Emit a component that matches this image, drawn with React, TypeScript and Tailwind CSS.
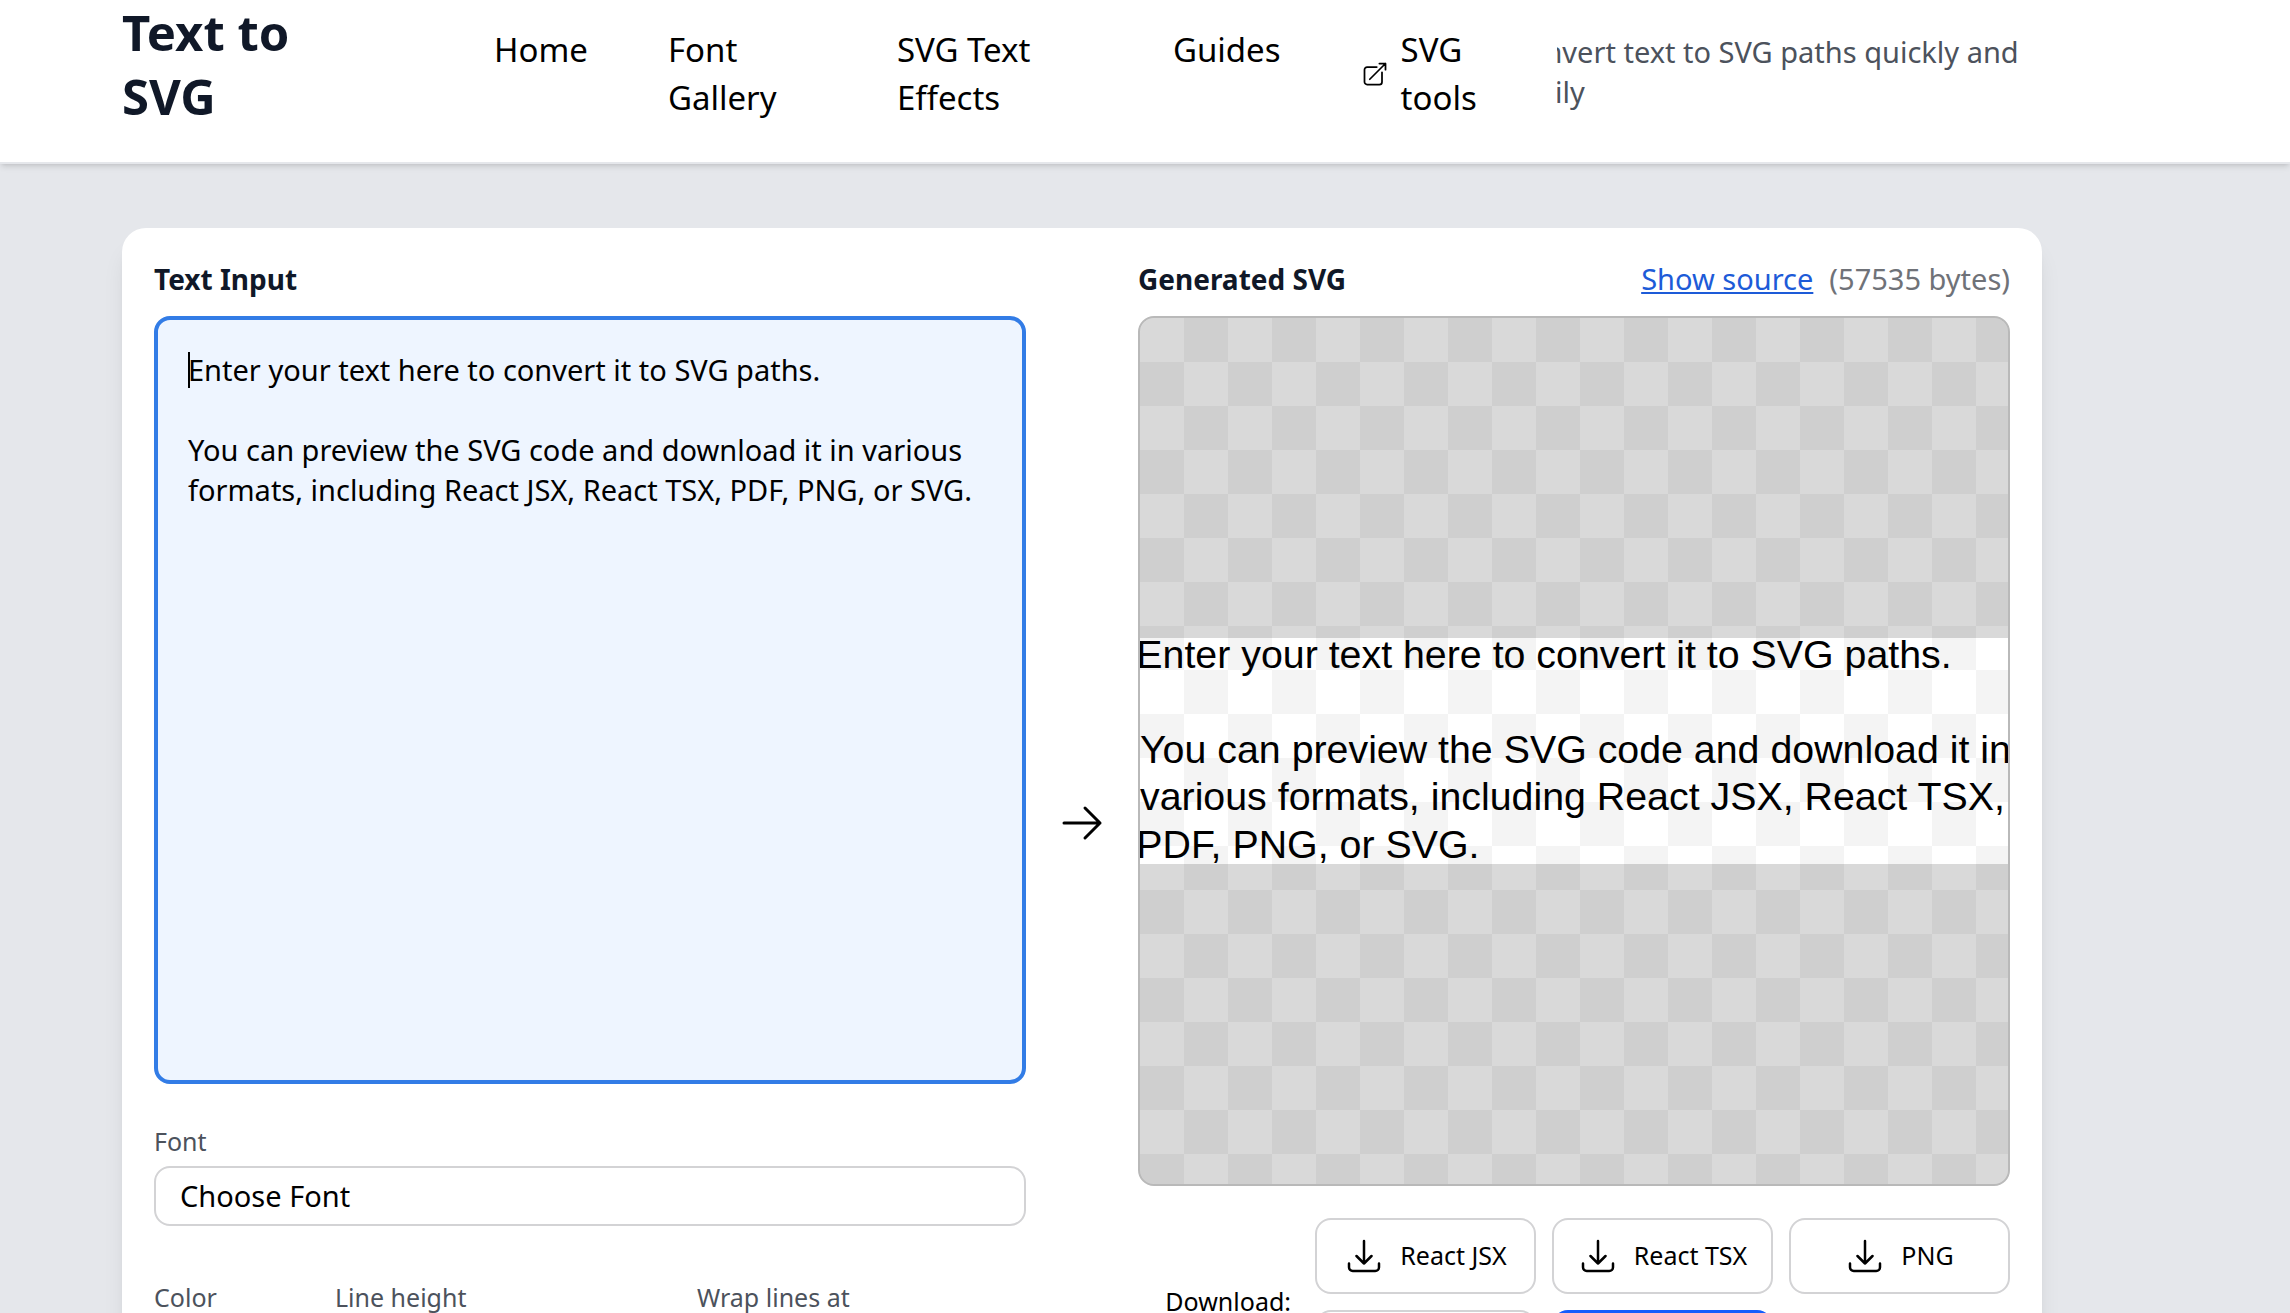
import React, { useState } from 'react';

const ICONS = {
  download:
    'M3 16.5v2.25A2.25 2.25 0 0 0 5.25 21h13.5A2.25 2.25 0 0 0 21 18.75V16.5M16.5 12 12 16.5m0 0L7.5 12m4.5 4.5V3',
  external:
    'M13.5 6H5.25A2.25 2.25 0 0 0 3 8.25v10.5A2.25 2.25 0 0 0 5.25 21h10.5A2.25 2.25 0 0 0 18 18.75V10.5m-10.5 6L21 3m0 0h-5.25M21 3v5.25',
  arrow: 'M13.5 4.5 21 12m0 0-7.5 7.5M21 12H3',
};

const Icon: React.FC<{ name: keyof typeof ICONS; className: string }> = ({ name, className }) => (
  <svg
    viewBox="0 0 24 24"
    fill="none"
    stroke="currentColor"
    strokeWidth={1.5}
    strokeLinecap="round"
    strokeLinejoin="round"
    aria-hidden="true"
    className={`shrink-0 ${className}`}
  >
    <path d={ICONS[name]} />
  </svg>
);

const DownloadButton: React.FC<{ label: string; primary?: boolean }> = ({ label, primary }) => (
  <button
    type="button"
    className={`flex h-[76px] items-center justify-center gap-4 rounded-2xl border-2 text-[25px] cursor-pointer ${
      primary ? 'border-blue-600 bg-blue-600 text-white' : 'border-[#d3d3d5] bg-white text-black'
    }`}
  >
    <Icon name="download" className="size-10" />
    {label}
  </button>
);

const Header: React.FC = () => (
  <header className="border-b-2 border-gray-200 bg-white shadow-md">
    <div className="flex h-[162px] items-start pl-[122px] pr-[248px]">
      <h1 className="w-[372px] shrink-0 text-[49px] leading-[64px] font-bold text-gray-900">
        Text to
        <br />
        SVG
      </h1>
      <nav className="flex shrink-0 gap-20 pt-[26px] text-[33px] leading-[48px] text-black">
        <a href="#home">Home</a>
        <a href="#fonts" className="w-[149px]">Font Gallery</a>
        <a href="#effects" className="w-[196px]">SVG Text Effects</a>
        <a href="#guides">Guides</a>
        <a href="#tools" className="flex w-[116px] items-center gap-3">
          <Icon name="external" className="size-7" />
          SVG tools
        </a>
      </nav>
      <div className="ml-20 min-w-0 flex-1 overflow-hidden pt-8">
        <p className="-ml-12 text-[29px] leading-[40px] whitespace-nowrap text-[#4c525c]">
          Convert text to SVG paths quickly and
          <br />
          easily
        </p>
      </div>
    </div>
  </header>
);

const PREVIEW_LINES = [
  { x: -3, y: 24, text: 'Enter your text here to convert it to SVG paths.' },
  { x: 0, y: 102, text: 'You can preview the SVG code and download it in' },
  { x: 0, y: 140, text: 'various formats, including React JSX, React TSX,' },
  { x: -3, y: 179, text: 'PDF, PNG, or SVG.' },
];

const Preview: React.FC = () => (
  <div className="flex h-[870px] items-center overflow-hidden rounded-2xl border-2 border-[#b9b9b9] bg-[repeating-conic-gradient(#f4f4f4_0_25%,#ffffff_0_50%)] bg-[length:88px_88px]">
    {/* everything outside the drawing is dimmed by its spread shadow */}
    <svg
      viewBox="0 0 706 184"
      className="block w-full overflow-visible shadow-[0_0_0_1000px_rgba(0,0,0,0.15)]"
      role="img"
      aria-label="Generated SVG"
    >
      {PREVIEW_LINES.map((line) => (
        <text key={line.y} x={line.x} y={line.y} fontSize={32} className="font-['Liberation_Sans',sans-serif]">
          {line.text}
        </text>
      ))}
    </svg>
  </div>
);

const fieldClass = 'h-[60px] w-full rounded-2xl border-2 border-[#d3d3d5] bg-white px-6 text-[29px]';
const labelClass = 'block text-[25px] leading-[38px] text-[#4c525c]';

export default function App() {
  const [text, setText] = useState(
    'Enter your text here to convert it to SVG paths.\n\nYou can preview the SVG code and download it in various formats, including React JSX, React TSX, PDF, PNG, or SVG.',
  );

  return (
    <div className="min-h-screen bg-gray-200 font-['Noto_Sans','Open_Sans',sans-serif] text-black">
      <Header />
      <main className="pt-16 pr-[248px] pb-16 pl-[122px]">
        <div className="grid grid-cols-[1fr_48px_1fr] items-center gap-x-8 rounded-3xl bg-white p-8 shadow-xl">
          <section className="self-start">
            <label htmlFor="source-text" className="block text-[28px] leading-[38px] font-bold text-gray-900">
              Text Input
            </label>
            <div className="relative mt-[18px]">
              <textarea
                id="source-text"
                value={text}
                onChange={(e) => setText(e.target.value)}
                spellCheck={false}
                className="block h-[768px] w-full resize-none rounded-2xl border-4 border-[#327ce6] bg-[#eef5ff] p-[30px] text-[29px] leading-10 outline-none"
              />
              <span aria-hidden="true" className="absolute top-9 left-[34px] h-9 w-[2px] bg-black" />
            </div>
            <div className="mt-[38px]">
              <label htmlFor="font" className={labelClass}>Font</label>
              <button id="font" type="button" className={`mt-[6px] text-left ${fieldClass}`}>Choose Font</button>
            </div>
            <div className="mt-[52px] grid grid-cols-[149px_330px_1fr] gap-x-8">
              <div>
                <label htmlFor="color" className={labelClass}>Color</label>
                <input id="color" type="color" defaultValue="#000000" className={`mt-[6px] ${fieldClass}`} />
              </div>
              <div>
                <label htmlFor="line-height" className={labelClass}>Line height</label>
                <input id="line-height" type="number" defaultValue={1.2} className={`mt-[6px] ${fieldClass}`} />
              </div>
              <div>
                <label htmlFor="wrap" className={labelClass}>Wrap lines at</label>
                <input id="wrap" type="number" defaultValue={50} className={`mt-[6px] ${fieldClass}`} />
              </div>
            </div>
          </section>

          <Icon name="arrow" className="size-12" />

          <section className="self-start">
            <div className="mb-[18px] flex h-[38px] items-baseline justify-between leading-[38px]">
              <h2 className="text-[28px] font-bold text-gray-900">Generated SVG</h2>
              <div className="flex gap-4 text-[29px]">
                <a href="#source" className="text-[#1d5bd8] underline">Show source</a>
                <span className="text-[#6f7278]">(57535 bytes)</span>
              </div>
            </div>
            <Preview />
            <div className="mt-8 flex items-center justify-end gap-6">
              <span className="text-[25px]">Download:</span>
              <div className="grid w-[695px] grid-cols-3 gap-4">
                <DownloadButton label="React JSX" />
                <DownloadButton label="React TSX" />
                <DownloadButton label="PNG" />
                <DownloadButton label="PDF" />
                <DownloadButton label="SVG" primary />
              </div>
            </div>
          </section>
        </div>
      </main>
    </div>
  );
}
